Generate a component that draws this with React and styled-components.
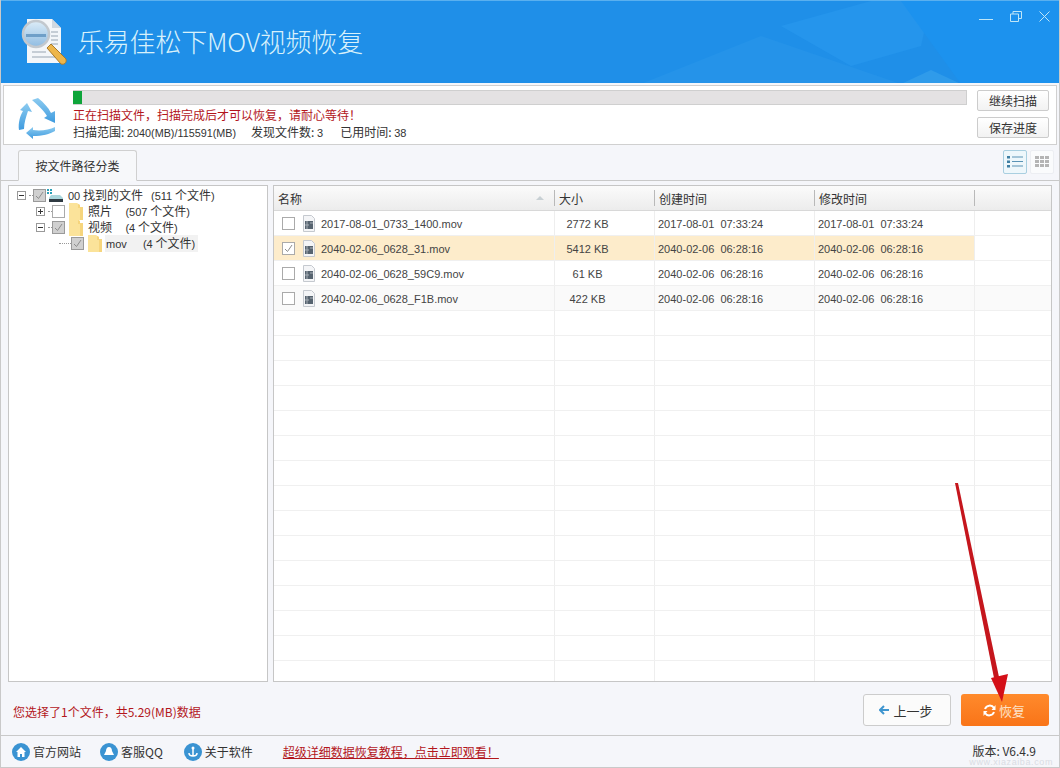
import React from "react";
import styled, { createGlobalStyle } from "styled-components";

const Global = createGlobalStyle`
  html, body { margin: 0; padding: 0; background: #f5f6fa; }
  body { font-family: "Liberation Sans", "Noto Sans CJK SC", sans-serif; font-size: 12px; color: #333; }
  * { box-sizing: border-box; }
`;
const Win = styled.div`
  position: relative; width: 1060px; height: 768px; overflow: hidden;
  background: #f5f6fa; border-left: 1px solid #c9c9c9; border-right: 1px solid #c9c9c9;
  border-bottom: 1px solid #c9c9c9; display: flex; flex-direction: column;
`;
const Header = styled.header`
  position: relative; height: 83px; flex: none; background: #1f8fe8; display: flex; align-items: center;
  padding: 0 0 0 19px; gap: 11px; overflow: hidden; border-top: 1px solid #5ab0ef;
`;
const HeaderArt = styled.svg`position: absolute; inset: 0;`;
const Title = styled.h1`
  position: relative; margin: -3px 0 0; font-size: 26px; font-weight: 300; color: #d8f1fb; letter-spacing: -0.2px; line-height: 1;
  font-family: "Noto Sans CJK SC", sans-serif;
`;
const WinControls = styled.div`
  position: absolute; top: 10px; right: 9px; display: flex; gap: 17px; align-items: flex-start;
`;
const Scan = styled.section`
  height: 60px; flex: none; margin: 2px 2px 0 2px; background: #fff; border: 1px solid #d0d0d0;
  display: flex; padding: 0 7px 0 12px; align-items: stretch;
`;
const RecycleBox = styled.div`width: 57px; flex: none; display: flex; align-items: center; padding-top: 8px;`;
const ScanInfo = styled.div`flex: 1; padding-top: 4px; display: flex; flex-direction: column;`;
const Progress = styled.div`
  height: 15px; background: #e4e2e3; border: 1px solid #cfcfcf; border-left: none;
`;
const ProgressFill = styled.div`height: 100%; background: #0ea53a;`;
const RedLine = styled.div`
  color: #b3161c; font-size: 12px; line-height: 16px; margin-top: 2px; font-family: "Noto Sans CJK SC", sans-serif;
`;
const Stats = styled.div`
  display: flex; font-size: 12px; line-height: 16px; color: #333; margin-top: 1px; font-family: "Noto Sans CJK SC", sans-serif;
`;
const Stat = styled.span`margin-right: ${p => p.$gap}px; white-space: pre;`;
const Lat = styled.span`font-family: "Liberation Sans", sans-serif; font-size: ${p => p.$s || 11}px;`;
const ScanBtns = styled.div`width: 72px; margin-left: 10px; flex: none; display: flex; flex-direction: column; gap: 6px; padding-top: 4px;`;
const ScanBtn = styled.button`
  height: 21px; width: 72px; padding: 0; border: 1px solid #ccc; border-radius: 2px; background: linear-gradient(#fff, #f2f2f2);
  font: 12px "Noto Sans CJK SC", sans-serif; color: #333;
`;
const TabBar = styled.div`
  height: 36px; flex: none; padding: 5px 5px 0 17px; display: flex; justify-content: space-between; align-items: flex-start;
  border-bottom: 1px solid #c9c9c9;
`;
const Tab = styled.div`
  width: 119px; height: 31px; background: #f7f8fa; border: 1px solid #d0d0d0; border-bottom: 1px solid #f7f8fa; border-radius: 3px 3px 0 0;
  display: flex; align-items: center; justify-content: center; font: 12px "Noto Sans CJK SC", sans-serif; color: #333;
`;
const ViewBtns = styled.div`display: flex; gap: 3px;`;
const ViewBtn = styled.div`
  width: 24px; height: 24px; border: 1px solid ${p => (p.$on ? "#a9cfe0" : "#eceef2")}; border-radius: 2px;
  background: ${p => (p.$on ? "#eef7fb" : "#fafbfc")}; display: flex; align-items: center; justify-content: center;
`;
const Body = styled.div`
  height: 501px; flex: none; display: flex; gap: 5px; padding: 4px 7px 0 7px;
`;
const Tree = styled.div`
  width: 260px; flex: none; background: #fff; border: 1px solid #c6c6c6; padding: 1px 0 0 8px; position: relative;
`;
const TreeRow = styled.div`
  height: 16px; display: flex; align-items: center; padding-left: ${p => p.$indent}px; font: 12px "Noto Sans CJK SC", sans-serif; color: #333;
`;
const TreeLabel = styled.span`
  display: block; white-space: pre; line-height: 16px; margin-left: ${p => p.$ml}px; padding: 0 ${p => (p.$sel ? 3 : 0)}px 0 ${p => (p.$sel ? 1 : 0)}px;
  background: ${p => (p.$sel ? "#f2f2f2" : "transparent")};
`;
const Expander = styled.span`
  width: 9px; height: 9px; border: 1px solid #999; background: #fff; position: relative; flex: none; margin-right: 3px;
  &::before { content: ""; position: absolute; left: 1px; right: 1px; top: 3px; height: 1px; background: #333; }
  &::after { content: ""; position: absolute; top: 1px; bottom: 1px; left: 3px; width: 1px; background: #333; display: ${p => (p.$plus ? "block" : "none")}; }
`;
const Dots = styled.span`
  width: ${p => p.$w}px; height: 1px; border-top: 1px dotted #999; flex: none;
`;
const Check = styled.span`
  width: 13px; height: 13px; flex: none; border: 1px solid ${p => (p.$gray ? "#9a9a9a" : "#aaa")};
  background: ${p => (p.$gray ? "#d0d0d0" : "#fff")}; display: flex; align-items: center; justify-content: center;
`;
const Gap = styled.span`width: ${p => p.$w}px; flex: none;`;
const Table = styled.div`
  flex: 1; background: #fff; border: 1px solid #c6c6c6; display: flex; flex-direction: column; overflow: hidden; position: relative;
`;
const Cols = "281px 100px 160px 160px 1fr";
const Head = styled.div`
  height: 25px; flex: none; display: grid; grid-template-columns: ${Cols}; background: linear-gradient(#fbfbfb, #ececec);
  border-bottom: 1px solid #d8d8d8;
  font: 12px "Noto Sans CJK SC", sans-serif; color: #333;
`;
const HeadCell = styled.div`
  position: relative; display: flex; align-items: center; padding-left: 4px;
  &:not(:last-child)::after { content: ""; position: absolute; right: 0; top: 4px; bottom: 4px; width: 1px; background: #b9b9b9; }
`;
const SortTri = styled.span`
  position: absolute; right: 11px; top: 10px; width: 0; height: 0; border-left: 4px solid transparent; border-right: 4px solid transparent; border-bottom: 4px solid #c8d0d4;
`;
const Row = styled.div`
  height: 25px; flex: none; display: grid; grid-template-columns: ${Cols}; align-items: stretch;
  background: ${p => (p.$sel ? "#fdeccb" : p.$alt ? "#fafafa" : "#fff")};
  border-bottom: 1px solid #f0f0f0; font-size: 11px; color: #444;
`;
const Cell = styled.div`
  display: flex; align-items: center; border-right: 1px solid #eeeeee; padding: 1px ${p => (p.$center ? 34 : 0)}px 0 ${p => p.$pl || 0}px;
  white-space: pre; justify-content: ${p => (p.$center ? "center" : "flex-start")};
`;
const EndCell = styled.div`background: ${p => (p.$sel ? "#fff" : "transparent")};`;
const NameWrap = styled.div`display: flex; align-items: center; gap: 6px;`;
const Bottom = styled.div`
  height: 53px; flex: none; padding: 0 10px 0 12px; display: flex; align-items: center; justify-content: space-between;
`;
const Selection = styled.div`color: #b3161c; font: 12px "Noto Sans CJK SC", sans-serif; margin-top: 5px;`;
const ActionBtns = styled.div`display: flex; gap: 10px; margin-top: 3px;`;
const Back = styled.button`
  width: 88px; height: 32px; border: 1px solid #ccc; border-radius: 3px; background: #fbfbfb; display: flex; align-items: center; justify-content: center; gap: 4px;
  font: 13px "Noto Sans CJK SC", sans-serif; color: #333; padding: 0 2px 0 0;
`;
const Go = styled.button`
  width: 88px; height: 32px; border: none; border-radius: 3px; background: linear-gradient(#ff8a2c, #f97418); display: flex; align-items: center; justify-content: center; gap: 3px;
  font: 13px "Noto Sans CJK SC", sans-serif; color: #fde3c8; padding: 0 2px 0 0;
`;
const Footer = styled.footer`
  flex: 1; border-top: 1px solid #c9c9c9; padding: 0 23px 0 11px; display: flex; align-items: center; font: 12px "Noto Sans CJK SC", sans-serif; color: #333;
`;
const FootLink = styled.div`display: flex; align-items: center; gap: 3px; margin-right: ${p => p.$gap}px;`;
const FootCircle = styled.span`
  width: 18px; height: 18px; border-radius: 50%; background: #3a93d2; display: flex; align-items: center; justify-content: center; flex: none;
`;
const Tutorial = styled.a`color: #b3161c; text-decoration: underline; margin-left: 30px; font-size: 12px;`;
const Version = styled.div`margin-left: auto; font-size: 12px; color: #333; line-height: 14px; margin-top: -2px;`;
const Overlay = styled.svg`position: absolute; left: 0; top: 0; pointer-events: none;`;
const Watermark = styled.div`
  position: absolute; right: 6px; bottom: 0; font-size: 9px; line-height: 9px; color: #d9dce3; letter-spacing: 0.6px;
`;

const Tick = ({ color = "#8d8d8d" }) => (
  <svg width="9" height="9" viewBox="0 0 9 9"><path d="M1 5l2.500 2.500L8 1" fill="none" stroke={color} strokeWidth="1" /></svg>
);
const Folder = () => (
  <svg width="14" height="17" viewBox="0 0 14 17" style={{ flex: "none" }}>
    <path d="M0 0h8l3 2v2h3v13H0z" fill="#fbe39a" />
    <path d="M9 1l2 1v2h3v13h-3V5H9z" fill="#f4cf70" opacity=".7" />
  </svg>
);
const Drive = () => (
  <svg width="16" height="15" viewBox="0 0 16 15" style={{ flex: "none" }}>
    <path d="M0 1h2v2H0zM3 1h2v2H3zM0 4h2v2H0zM3 4h2v2H3z" fill="#2aa0b8" />
    <path d="M4 7h9l3 3v2H2v-2z" fill="#a9d6dc" />
    <rect x="2" y="11" width="14" height="3" fill="#2f3a42" />
  </svg>
);
const FileIcon = () => (
  <svg width="12" height="17" viewBox="0 0 12 17" style={{ flex: "none", marginLeft: 2 }}>
    <path d="M.5.5h8l3 3v13H.5z" fill="#f4f5f7" stroke="#c5c9cf" />
    <rect x="2" y="6" width="8" height="8" fill="#56636f" />
    <path d="M4 6v8M7 8h3M2 10h4" stroke="#a8b0b8" strokeWidth="1" />
  </svg>
);
const Recycle = () => (
  <svg width="42" height="44" viewBox="0 0 42 44">
    <defs>
      <linearGradient id="rc" x1="0" y1="0" x2="0" y2="1">
        <stop offset="0" stopColor="#8ccbf0" />
        <stop offset="1" stopColor="#3f9bdf" />
      </linearGradient>
    </defs>
    <g fill="url(#rc)">
      <path d="M16 3L22 1C28 6 32 10 35 16L39 14L39 26L28 21L31 19C28 14 22 8 16 3z" />
      <path d="M39 30L39 34C34 37 26 39 17 39L17 42L10 36L17 30L17 33C25 34 33 33 39 30z" />
      <path d="M3 33C2 26 4 19 7 14L4 13L11 6L16 15L12 14C10 20 8 26 8 32z" />
    </g>
  </svg>
);
const Logo = () => (
  <svg width="47" height="46" viewBox="0 0 47 46" style={{ position: "relative", flex: "none" }}>
    <defs>
      <linearGradient id="lens" x1="0" y1="0" x2="0" y2="1">
        <stop offset="0" stopColor="#dcecf7" />
        <stop offset="1" stopColor="#8fbce2" />
      </linearGradient>
    </defs>
    <path d="M7 0h25l9 9v35H7z" fill="#f3f6f9" />
    <path d="M32 0v9h9z" fill="#cfd8e0" />
    <path d="M31 13h7M31 17h7M31 21h7M31 25h7M12 33h14M12 38h24" stroke="#b6c0c9" strokeWidth="1.500" />
    <circle cx="16" cy="15" r="13" fill="url(#lens)" stroke="#c2c8ce" strokeWidth="2.500" />
    <rect x="6" y="15" width="20" height="3" fill="#6f9fc8" />
    <path d="M27 29l4-4 15 15c1 4-2 6-5 5z" fill="#edb64a" stroke="#a97a2a" strokeWidth="1" />
  </svg>
);

const rows = [
  ["2017-08-01_0733_1400.mov", "2772 KB", "2017-08-01  07:33:24"],
  ["2040-02-06_0628_31.mov", "5412 KB", "2040-02-06  06:28:16"],
  ["2040-02-06_0628_59C9.mov", "61 KB", "2040-02-06  06:28:16"],
  ["2040-02-06_0628_F1B.mov", "422 KB", "2040-02-06  06:28:16"],
];
const blanks = Array.from({ length: 15 }, (_, i) => i);

export default function App() {
  return (
    <Win>
      <Global />
      <Header>
        <HeaderArt width="1058" height="83" viewBox="0 0 1058 83">
          <path d="M640 83L760 35 900 83z" fill="#2593e9" />
          <path d="M780 25L870 0h60l-10 45-70 20z" fill="#2595ec" />
          <path d="M900 83l30-14 30 14z" fill="#2f9bea" />
          <path d="M900 0h158v83H960z" fill="#1c92ee" />
        </HeaderArt>
        <Logo />
        <Title>乐易佳松下MOV视频恢复</Title>
        <WinControls>
          <svg width="14" height="10" viewBox="0 0 14 10"><path d="M0 8.500h14" stroke="#bfe6f7" strokeWidth="1" /></svg>
          <svg width="12" height="11" viewBox="0 0 12 11"><path d="M.5 3h8v7.500h-8zM3 3V.5h8.500v7h-3" fill="none" stroke="#bfe6f7" /></svg>
          <svg width="11" height="11" viewBox="0 0 11 11"><path d="M.5.5l10 10M10.500.5l-10 10" stroke="#bfe6f7" /></svg>
        </WinControls>
      </Header>
      <Scan>
        <RecycleBox><Recycle /></RecycleBox>
        <ScanInfo>
          <Progress><ProgressFill style={{ width: 9 }} /></Progress>
          <RedLine>正在扫描文件，扫描完成后才可以恢复，请耐心等待！</RedLine>
          <Stats>
            <Stat $gap={15}>扫描范围: <Lat $s={10.8}>2040(MB)/115591(MB)</Lat></Stat>
            <Stat $gap={17}>发现文件数: <Lat>3</Lat></Stat>
            <Stat $gap={0}>已用时间: <Lat>38</Lat></Stat>
          </Stats>
        </ScanInfo>
        <ScanBtns>
          <ScanBtn>继续扫描</ScanBtn>
          <ScanBtn>保存进度</ScanBtn>
        </ScanBtns>
      </Scan>
      <TabBar>
        <Tab>按文件路径分类</Tab>
        <ViewBtns>
          <ViewBtn $on>
            <svg width="16" height="12" viewBox="0 0 16 12"><path d="M0 0h3v2.500H0zM0 4.500h3V7H0zM0 9h3v2.500H0z" fill="#3f7fa3" /><path d="M5 1h11M5 5.500h11M5 10h11" stroke="#5a93b5" /></svg>
          </ViewBtn>
          <ViewBtn>
            <svg width="15" height="12" viewBox="0 0 15 12" fill="#b4b4b4"><path d="M0 0h4v3H0zM5 0h4v3H5zM10 0h4v3h-4zM0 4h4v3H0zM5 4h4v3H5zM10 4h4v3h-4zM0 8h4v3H0zM5 8h4v3H5zM10 8h4v3h-4z" /></svg>
          </ViewBtn>
        </ViewBtns>
      </TabBar>
      <Body>
        <Tree>
          <TreeRow $indent={0}>
            <Expander /><Dots $w={4} /><Check $gray><Tick /></Check><Gap $w={1} /><Drive />
            <TreeLabel $ml={5}><Lat>00</Lat> 找到的文件   <Lat>(511</Lat> 个文件<Lat>)</Lat></TreeLabel>
          </TreeRow>
          <TreeRow $indent={19}>
            <Expander $plus /><Dots $w={4} /><Check /><Gap $w={4} /><Folder />
            <TreeLabel $ml={5}>照片     <Lat>(507</Lat> 个文件<Lat>)</Lat></TreeLabel>
          </TreeRow>
          <TreeRow $indent={19}>
            <Expander /><Dots $w={4} /><Check $gray><Tick /></Check><Gap $w={4} /><Folder />
            <TreeLabel $ml={5}>视频     <Lat>(4</Lat> 个文件<Lat>)</Lat></TreeLabel>
          </TreeRow>
          <TreeRow $indent={42}>
            <Dots $w={12} /><Check $gray><Tick /></Check><Gap $w={4} /><Folder />
            <TreeLabel $ml={3} $sel><Lat>mov</Lat>      <Lat>(4</Lat> 个文件<Lat>)</Lat></TreeLabel>
          </TreeRow>
        </Tree>
        <Table>
          <Head>
            <HeadCell>名称<SortTri /></HeadCell>
            <HeadCell>大小</HeadCell>
            <HeadCell>创建时间</HeadCell>
            <HeadCell>修改时间</HeadCell>
            <HeadCell />
          </Head>
          {rows.map((r, i) => (
            <Row key={r[0]} $sel={i === 1} $alt={i === 3}>
              <Cell $pl={8}>
                <NameWrap>
                  <Check>{i === 1 && <Tick />}</Check>
                  <FileIcon />
                  <span>{r[0]}</span>
                </NameWrap>
              </Cell>
              <Cell $center>{r[1]}</Cell>
              <Cell $pl={3}>{r[2]}</Cell>
              <Cell $pl={3}>{r[2]}</Cell>
              <EndCell $sel={i === 1} />
            </Row>
          ))}
          {blanks.map(i => (
            <Row key={i}>
              <Cell /><Cell /><Cell /><Cell /><EndCell />
            </Row>
          ))}
        </Table>
      </Body>
      <Bottom>
        <Selection>您选择了1个文件，共5.29(MB)数据</Selection>
        <ActionBtns>
          <Back>
            <svg width="10" height="10" viewBox="0 0 10 10"><path d="M5 1L1 5l4 4M1 5h9" fill="none" stroke="#3f95cf" strokeWidth="2" /></svg>
            上一步
          </Back>
          <Go>
            <svg width="13" height="13" viewBox="0 0 13 13"><path d="M2 5a5 5 0 0 1 9-1M11 8a5 5 0 0 1-9 1" fill="none" stroke="#fff" strokeWidth="2" /><path d="M12.500 1v5h-4zM.500 12V7h4z" fill="#fff" /></svg>
            恢复
          </Go>
        </ActionBtns>
      </Bottom>
      <Footer>
        <FootLink $gap={19}>
          <FootCircle><svg width="10" height="10" viewBox="0 0 10 10"><path d="M5 0l5 5H8.500v5H6V7H4v3H1.500V5H0z" fill="#fff" /></svg></FootCircle>
          官方网站
        </FootLink>
        <FootLink $gap={21}>
          <FootCircle><svg width="10" height="10" viewBox="0 0 10 10"><path d="M5 0c2 0 3 2 3 4l2 4H0l2-4c0-2 1-4 3-4z" fill="#fff" /></svg></FootCircle>
          客服QQ
        </FootLink>
        <FootLink $gap={0}>
          <FootCircle><svg width="10" height="12" viewBox="0 0 10 12"><path d="M5 2v8M1 7c0 2 2 3 4 3s4-1 4-3" fill="none" stroke="#fff" strokeWidth="1.500" /><circle cx="5" cy="2" r="1.500" fill="#fff" /></svg></FootCircle>
          关于软件
        </FootLink>
        <Tutorial>超级详细数据恢复教程，点击立即观看！</Tutorial>
        <Version>版本: V6.4.9</Version>
      </Footer>
      <Watermark>www.xiazaiba.com</Watermark>
      <Overlay width="1060" height="768" viewBox="0 0 1060 768">
        <path d="M954 483L957 483L998 677L993 678z" fill="#c5161d" />
        <path d="M990 678L1007 674L1001 702z" fill="#d40f18" />
      </Overlay>
    </Win>
  );
}
